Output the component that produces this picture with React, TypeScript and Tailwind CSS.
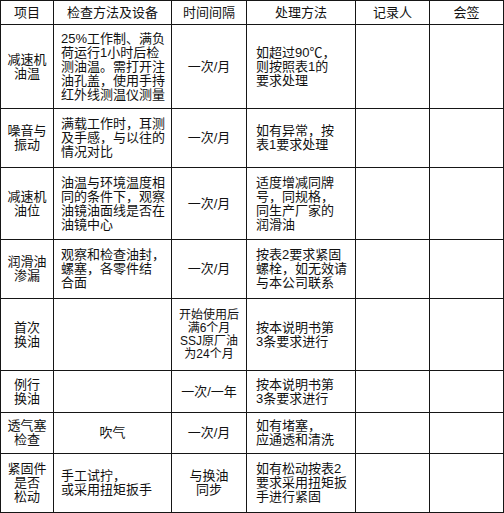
import React from 'react'

type Row = {
  item: string[]
  method: string[]
  methodCenter?: boolean
  interval: string[]
  intervalSmall?: boolean
  handle: string[]
}

const rows: Row[] = [
  {
    item: ['减速机', '油温'],
    method: ['25%工作制、满负', '荷运行1小时后检', '测油温。需打开注', '油孔盖，使用手持', '红外线测温仪测量'],
    interval: ['一次/月'],
    handle: ['如超过90℃，', '则按照表1的', '要求处理'],
  },
  {
    item: ['噪音与', '振动'],
    method: ['满载工作时，耳测', '及手感，与以往的', '情况对比'],
    interval: ['一次/月'],
    handle: ['如有异常，按', '表1要求处理'],
  },
  {
    item: ['减速机', '油位'],
    method: ['油温与环境温度相', '同的条件下，观察', '油镜油面线是否在', '油镜中心'],
    interval: ['一次/月'],
    handle: ['适度增减同牌', '号，同规格，', '同生产厂家的', '润滑油'],
  },
  {
    item: ['润滑油', '渗漏'],
    method: ['观察和检查油封，', '螺塞，各零件结', '合面'],
    interval: ['一次/月'],
    handle: ['按表2要求紧固', '螺栓，如无效请', '与本公司联系'],
  },
  {
    item: ['首次', '换油'],
    method: [],
    interval: ['开始使用后', '满6个月', 'SSJ原厂油', '为24个月'],
    intervalSmall: true,
    handle: ['按本说明书第', '3条要求进行'],
  },
  {
    item: ['例行', '换油'],
    method: [],
    interval: ['一次/一年'],
    handle: ['按本说明书第', '3条要求进行'],
  },
  {
    item: ['透气塞', '检查'],
    method: ['吹气'],
    methodCenter: true,
    interval: ['一次/月'],
    handle: ['如有堵塞，', '应通透和清洗'],
  },
  {
    item: ['紧固件', '是否', '松动'],
    method: ['手工试拧，', '或采用扭矩扳手'],
    interval: ['与换油', '同步'],
    handle: ['如有松动按表2', '要求采用扭矩扳', '手进行紧固'],
  },
]

const Lines = ({ lines }: { lines: string[] }) => (
  <div>
    {lines.map((l, i) => (
      <div key={i}>{l}</div>
    ))}
  </div>
)

export default function App() {
  const headers = ['项目', '检查方法及设备', '时间间隔', '处理方法', '记录人', '会签']

  return (
    <div className="w-[504px] h-[513px] bg-white font-['Liberation_Sans','Noto_Sans_CJK_SC',sans-serif] text-[13px] text-[#111]">
      <div className="grid grid-cols-[52px_117px_74px_108px_73px_73px] grid-rows-[23px_83px_58px_71px_58px_71px_41px_40px_58px] gap-px bg-[#161616] p-px">
        {headers.map((h) => (
          <div key={h} className="bg-white flex items-center justify-center leading-[15px]">
            {h}
          </div>
        ))}
        {rows.map((r, i) => (
          <React.Fragment key={i}>
            <div className="bg-white flex items-center justify-center text-center leading-[14px]">
              <Lines lines={r.item} />
            </div>
            <div
              className={
                r.methodCenter
                  ? 'bg-white flex items-center justify-center leading-[14px]'
                  : 'bg-white flex items-center pl-[7px] leading-[14px]'
              }
            >
              <Lines lines={r.method} />
            </div>
            <div
              className={
                r.intervalSmall
                  ? 'bg-white flex items-center justify-center text-center text-[12px] leading-[13px]'
                  : 'bg-white flex items-center justify-center text-center leading-[14px]'
              }
            >
              <Lines lines={r.interval} />
            </div>
            <div className="bg-white flex items-center pl-[9px] leading-[14px]">
              <Lines lines={r.handle} />
            </div>
            <div className="bg-white" />
            <div className="bg-white" />
          </React.Fragment>
        ))}
      </div>
    </div>
  )
}
